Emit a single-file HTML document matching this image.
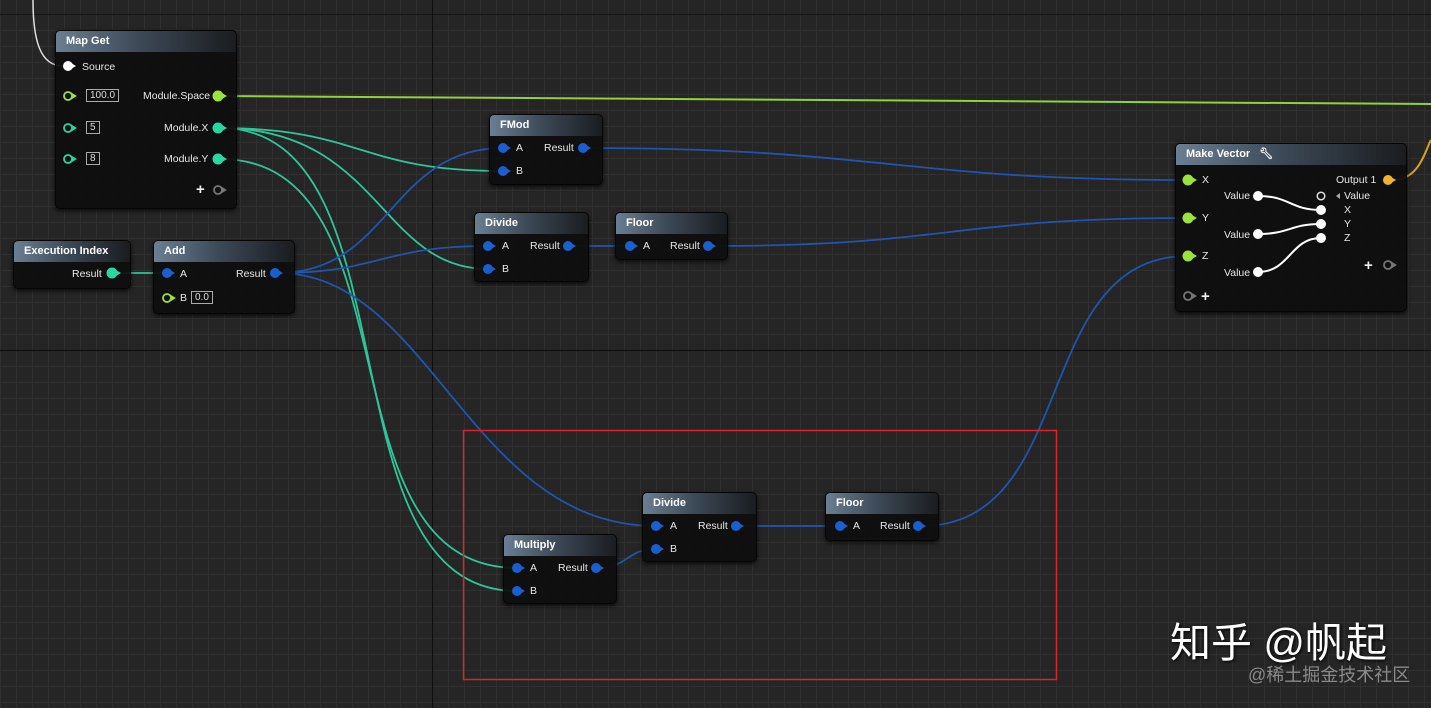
<!DOCTYPE html>
<html><head><meta charset="utf-8"><style>
html,body{margin:0;padding:0}
body{width:1431px;height:708px;overflow:hidden;position:relative;background:#252525;
font-family:"Liberation Sans",sans-serif;
background-image:
linear-gradient(#0e0e0e,#0e0e0e),linear-gradient(#0e0e0e,#0e0e0e),linear-gradient(#151515,#151515),
linear-gradient(90deg,#303030 1px,transparent 1px),
linear-gradient(#303030 1px,transparent 1px);
background-size:1px 708px,1431px 1px,1431px 1px,16px 16px,16px 16px;
background-position:432px 0,0 350px,0 14px,0 14px,0 14px;
background-repeat:no-repeat,no-repeat,no-repeat,repeat,repeat;}
.n{position:absolute;background:rgba(14,14,14,.94);border:1px solid #050505;border-radius:5px;box-shadow:0 2px 4px rgba(0,0,0,.7)}
.h{height:21px;border-radius:4px 4px 0 0;background:linear-gradient(90deg,#6b7e92 0%,#3d4a58 45%,#1a1c1f 100%);color:#fff;font-weight:bold;font-size:11px;line-height:21px;padding-left:10px;}
.t{position:absolute;color:#e6e6e6;font-size:10.5px;line-height:12px;white-space:nowrap}
.bx{position:absolute;border:1px solid #aaa;color:#ddd;font-size:10px;line-height:11px;padding:0 3px}
svg{position:absolute;left:0;top:0}
</style></head><body>
<svg width="1431" height="708" fill="none" stroke-width="2">
<path d="M33,0 C33,40 40,66 63,66" stroke="#ddd" stroke-width="1.5"/>
<path d="M220,96 C500,96 900,104 1431,104" stroke="#8fd23a"/>
<g stroke="#2fc59a" stroke-width="1.8">
<path d="M220,128 C360,128 360,171 500,171"/>
<path d="M220,128 C380,128 380,269 488,269"/>
<path d="M220,128 C420,128 317,591 517,591"/>
<path d="M220,159 C420,159 317,568 517,568"/>
<path d="M113,273 L168,273"/>
</g>
<g stroke="#1f55b0" stroke-width="1.8">
<path d="M278,273 C390,273 390,148 503,148"/>
<path d="M278,273 C380,273 380,246 488,246"/>
<path d="M278,273 C430,273 470,526 656,526"/>
<path d="M598,568 C628,568 626,549 656,549"/>
<path d="M585,148 C880,148 900,180 1188,180"/>
<path d="M570,246 L630,246"/>
<path d="M711,246 C950,246 950,218 1188,218"/>
<path d="M738,526 L840,526"/>
<path d="M921,526 C1080,526 1030,256 1188,256"/>
</g>
<path d="M1392,180 C1420,180 1425,150 1431,140" stroke="#d9a21c"/>
<rect x="463.5" y="430.5" width="593" height="249" stroke="#d8242a" stroke-width="1.5"/>
</svg>

<div class="n" style="left:55px;top:30px;width:180px;height:177px"><div class="h">Map Get</div></div>
<div class="n" style="left:13px;top:240px;width:116px;height:47px"><div class="h">Execution Index</div></div>
<div class="n" style="left:153px;top:240px;width:140px;height:72px"><div class="h">Add</div></div>
<div class="n" style="left:489px;top:114px;width:112px;height:69px"><div class="h">FMod</div></div>
<div class="n" style="left:474px;top:212px;width:113px;height:68px"><div class="h">Divide</div></div>
<div class="n" style="left:615px;top:212px;width:111px;height:46px"><div class="h">Floor</div></div>
<div class="n" style="left:1175px;top:143px;width:230px;height:167px"><div class="h">Make Vector <span style="margin-left:6px">🔧︎</span></div></div>
<div class="n" style="left:642px;top:492px;width:113px;height:68px"><div class="h">Divide</div></div>
<div class="n" style="left:825px;top:492px;width:112px;height:47px"><div class="h">Floor</div></div>
<div class="n" style="left:503px;top:534px;width:112px;height:68px"><div class="h">Multiply</div></div>

<svg width="1431" height="708">
<defs>
<g id="pf"><circle r="5"/><path d="M3,-3 L8,0 L3,3Z"/></g>
<g id="po"><circle r="4" fill="none" stroke-width="1.8"/><path d="M4,-2.5 L8,0 L4,2.5Z"/></g>
</defs>
<g fill="#fff"><use href="#pf" x="68" y="66"/></g>
<g fill="#9be23c" stroke="#9be23c"><use href="#po" x="68" y="96"/><use href="#pf" x="218" y="96"/><use href="#po" x="167" y="298"/>
<use href="#pf" x="1188" y="180"/><use href="#pf" x="1188" y="218"/><use href="#pf" x="1188" y="256"/></g>
<g fill="#2ad7a0" stroke="#2ad7a0"><use href="#po" x="68" y="128"/><use href="#po" x="68" y="159"/><use href="#pf" x="218" y="128"/><use href="#pf" x="218" y="159"/><use href="#pf" x="112" y="273"/></g>
<g fill="#1a5fd0">
<use href="#pf" x="167" y="273"/><use href="#pf" x="275" y="273"/>
<use href="#pf" x="503" y="148"/><use href="#pf" x="503" y="171"/><use href="#pf" x="583" y="148"/>
<use href="#pf" x="488" y="246"/><use href="#pf" x="488" y="269"/><use href="#pf" x="568" y="246"/>
<use href="#pf" x="630" y="246"/><use href="#pf" x="708" y="246"/>
<use href="#pf" x="656" y="526"/><use href="#pf" x="656" y="549"/><use href="#pf" x="736" y="526"/>
<use href="#pf" x="840" y="526"/><use href="#pf" x="918" y="526"/>
<use href="#pf" x="517" y="568"/><use href="#pf" x="517" y="591"/><use href="#pf" x="596" y="568"/>
</g>
<g fill="#f0b428"><use href="#pf" x="1388" y="180"/></g>
<g fill="#777" stroke="#777"><use href="#po" x="218" y="190"/><use href="#po" x="1388" y="265"/><use href="#po" x="1188" y="296"/></g>
<g fill="#fff" stroke="#fff">
<path d="M1258,196 C1290,196 1290,210 1321,210" fill="none" stroke-width="2"/>
<path d="M1258,234 C1290,234 1290,224 1321,224" fill="none" stroke-width="2"/>
<path d="M1258,272 C1290,272 1290,238 1321,238" fill="none" stroke-width="2"/>
<circle cx="1258" cy="196" r="4.5"/><circle cx="1258" cy="234" r="4.5"/><circle cx="1258" cy="272" r="4.5"/>
<circle cx="1321" cy="210" r="4.5"/><circle cx="1321" cy="224" r="4.5"/><circle cx="1321" cy="238" r="4.5"/>
<circle cx="1321" cy="196" r="3.8" fill="none" stroke="#ddd" stroke-width="1.5"/>
<path d="M1336,196 L1340,193 L1340,199Z" fill="#aaa" stroke="none"/>
</g>
<g fill="#eee" stroke="none" font-size="15" font-weight="bold">
<text x="196" y="194">+</text><text x="1364" y="270">+</text><text x="1201" y="301">+</text>
</g>
</svg>

<div class="t" style="left:82px;top:61px">Source</div>
<div class="bx" style="left:86px;top:89px">100.0</div>
<div class="t" style="left:143px;top:90px">Module.Space</div>
<div class="bx" style="left:86px;top:121px">5</div>
<div class="t" style="left:164px;top:122px">Module.X</div>
<div class="bx" style="left:86px;top:152px">8</div>
<div class="t" style="left:164px;top:153px">Module.Y</div>
<div class="t" style="left:72px;top:268px">Result</div>
<div class="t" style="left:180px;top:268px">A</div>
<div class="t" style="left:236px;top:268px">Result</div>
<div class="t" style="left:180px;top:292px">B</div>
<div class="bx" style="left:191px;top:291px">0.0</div>
<div class="t" style="left:516px;top:142px">A</div><div class="t" style="left:544px;top:142px">Result</div><div class="t" style="left:516px;top:165px">B</div>
<div class="t" style="left:502px;top:240px">A</div><div class="t" style="left:530px;top:240px">Result</div><div class="t" style="left:502px;top:263px">B</div>
<div class="t" style="left:643px;top:240px">A</div><div class="t" style="left:670px;top:240px">Result</div>
<div class="t" style="left:670px;top:520px">A</div><div class="t" style="left:698px;top:520px">Result</div><div class="t" style="left:670px;top:543px">B</div>
<div class="t" style="left:853px;top:520px">A</div><div class="t" style="left:880px;top:520px">Result</div>
<div class="t" style="left:530px;top:562px">A</div><div class="t" style="left:558px;top:562px">Result</div><div class="t" style="left:530px;top:585px">B</div>
<div class="t" style="left:1202px;top:174px">X</div><div class="t" style="left:1202px;top:212px">Y</div><div class="t" style="left:1202px;top:250px">Z</div>
<div class="t" style="left:1336px;top:174px">Output 1</div>
<div class="t" style="left:1344px;top:190px">Value</div>
<div class="t" style="left:1344px;top:204px">X</div><div class="t" style="left:1344px;top:218px">Y</div><div class="t" style="left:1344px;top:232px">Z</div>
<div class="t" style="left:1224px;top:190px">Value</div><div class="t" style="left:1224px;top:229px">Value</div><div class="t" style="left:1224px;top:267px">Value</div>

<div style="position:absolute;left:1170px;top:620px;color:#fff;font-size:41px;line-height:46px;font-family:'Liberation Sans','Noto Sans CJK SC',sans-serif;text-shadow:1px 1px 3px #000;white-space:nowrap">知乎 @帆起</div>
<div style="position:absolute;left:1248px;top:665px;color:#8a8a8a;font-size:18px;line-height:21px;font-family:'Liberation Sans','Noto Sans CJK SC',sans-serif;white-space:nowrap">@稀土掘金技术社区</div>
</body></html>
